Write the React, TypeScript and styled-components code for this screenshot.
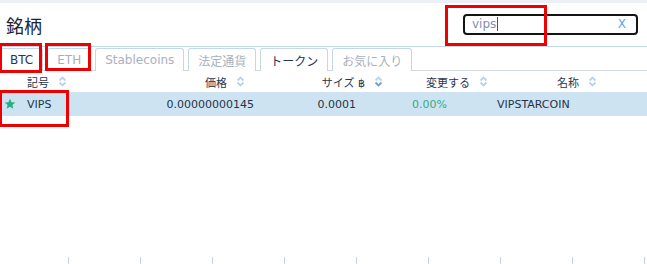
import styled, { createGlobalStyle } from "styled-components";

const GlobalStyle = createGlobalStyle`
  html, body {
    margin: 0;
    padding: 0;
    background: #ffffff;
  }
  body {
    font-family: "DejaVu Sans", "Noto Sans CJK JP", sans-serif;
    color: #273349;
  }
`;

const Page = styled.div`
  position: relative;
  width: 647px;
  height: 264px;
  display: flex;
  flex-direction: column;
  overflow: hidden;
  background: #fff;
`;

const TopStrip = styled.div`
  height: 3px;
  background: #eceff5;
`;

const Header = styled.div`
  height: 43px;
  display: flex;
  align-items: center;
  justify-content: space-between;
  padding: 0 9px 0 6px;
  border-bottom: 1px solid #c3d7eb;
`;

const Title = styled.h1`
  margin: 0;
  font-family: "Noto Sans CJK JP", sans-serif;
  font-weight: 400;
  font-size: 18px;
  color: #1b2535;
  line-height: 1;
`;

const SearchBox = styled.div`
  box-sizing: border-box;
  width: 175px;
  height: 21px;
  margin-top: -1px;
  border: 2px solid #141414;
  border-radius: 4px;
  display: flex;
  align-items: center;
  padding: 0 10px 0 7px;
  font-size: 12px;
`;

const SearchText = styled.span`
  color: #8290b0;
`;

const Caret = styled.span`
  width: 1px;
  height: 14px;
  background: #555;
  margin-left: 1px;
`;

const Clear = styled.span`
  margin-left: auto;
  color: #62a6e6;
  font-size: 12px;
`;

const Tabs = styled.div`
  display: flex;
  gap: 4px;
  padding-top: 1px;
  height: 24px;
  box-sizing: border-box;
  border-bottom: 1px solid #d3dae2;
`;

const Tab = styled.div<{ $active?: boolean }>`
  box-sizing: border-box;
  height: 23px;
  padding: 0 9px;
  display: flex;
  align-items: center;
  font-size: 12px;
  font-family: "DejaVu Sans", "Noto Sans CJK JP", sans-serif;
  color: ${(p) => (p.$active ? "#2a3550" : "#a9b0bd")};
  background: #fff;
  border: 1px solid ${(p) => (p.$active ? "#c8d6e6" : "#c5d6e8")};
  border-bottom: none;
  border-radius: 3px 3px 0 0;
`;

const grid = "22px 118px 122px 128px 100px 1fr";

const HeadRow = styled.div`
  display: grid;
  grid-template-columns: ${grid};
  height: 21px;
  align-items: center;
  font-size: 11px;
  color: #2a3650;
`;

const DataRow = styled.div`
  display: grid;
  grid-template-columns: ${grid};
  height: 24px;
  align-items: center;
  font-size: 11px;
  background: #cde3f1;
`;

const Cell = styled.div<{ $right?: boolean; $pl?: number; $pr?: number; $color?: string }>`
  display: flex;
  align-items: center;
  justify-content: ${(p) => (p.$right ? "flex-end" : "flex-start")};
  padding-left: ${(p) => p.$pl ?? 0}px;
  padding-right: ${(p) => p.$pr ?? 0}px;
  color: ${(p) => p.$color ?? "inherit"};
  white-space: nowrap;
`;

const HeadLabel = styled.span`
  font-family: "DejaVu Sans", "Noto Sans CJK JP", sans-serif;
`;

const SortIcon = ({ active }: { active?: boolean }) => (
  <svg width="9" height="11" viewBox="0 0 9 11" style={{ marginLeft: 9 }}>
    <path d="M1.5 4.5 L4.5 1.5 L7.5 4.5" fill="none" stroke="#bcd2e8" strokeWidth="1.8" />
    <path d="M1.5 6.5 L4.5 9.5 L7.5 6.5" fill="none" stroke={active ? "#6f9fd4" : "#bcd2e8"} strokeWidth="1.8" />
  </svg>
);

const Star = () => (
  <svg width="12" height="12" viewBox="0 0 24 24">
    <path d="M12 1.5l3.1 7 7.4.6-5.6 4.9 1.7 7.4L12 17.5l-6.6 3.9 1.7-7.4L1.5 9.1l7.4-.6z" fill="#2bad83" />
  </svg>
);

const Spacer = styled.div`
  flex: 1;
`;

const Ticks = styled.div`
  height: 7px;
  display: flex;
  padding-left: 68px;
  gap: 71px;
`;

const Tick = styled.div`
  width: 1px;
  height: 7px;
  background: #c7cfe6;
`;

const Mark = styled.div<{ $x: number; $y: number; $w: number; $h: number }>`
  position: absolute;
  left: ${(p) => p.$x}px;
  top: ${(p) => p.$y}px;
  width: ${(p) => p.$w}px;
  height: ${(p) => p.$h}px;
  box-sizing: border-box;
  border: 3px solid #ee0000;
  pointer-events: none;
`;

const tabs = ["BTC", "ETH", "Stablecoins", "法定通貨", "トークン", "お気に入り"];

export default function App() {
  return (
    <Page>
      <GlobalStyle />
      <TopStrip />
      <Header>
        <Title>銘柄</Title>
        <SearchBox>
          <SearchText>vips</SearchText>
          <Caret />
          <Clear>X</Clear>
        </SearchBox>
      </Header>
      <Tabs>
        {tabs.map((t, i) => (
          <Tab key={t} $active={i === 0 || i === 4}>
            {t}
          </Tab>
        ))}
      </Tabs>
      <HeadRow>
        <Cell />
        <Cell $pl={5}>
          <HeadLabel>記号</HeadLabel>
          <SortIcon />
        </Cell>
        <Cell $right $pr={17}>
          <HeadLabel>価格</HeadLabel>
          <SortIcon />
        </Cell>
        <Cell $right $pr={7}>
          <HeadLabel>サイズ ฿</HeadLabel>
          <SortIcon active />
        </Cell>
        <Cell $pl={36}>
          <HeadLabel>変更する</HeadLabel>
          <SortIcon />
        </Cell>
        <Cell $pl={67}>
          <HeadLabel>名称</HeadLabel>
          <SortIcon />
        </Cell>
      </HeadRow>
      <DataRow>
        <Cell $pl={4}>
          <Star />
        </Cell>
        <Cell $pl={5}>VIPS</Cell>
        <Cell $right $pr={8}>0.00000000145</Cell>
        <Cell $right $pr={34}>0.0001</Cell>
        <Cell $pl={22} $color="#36a985">0.00%</Cell>
        <Cell $pl={7}>VIPSTARCOIN</Cell>
      </DataRow>
      <Spacer />
      <Ticks>
        {Array.from({ length: 9 }).map((_, i) => (
          <Tick key={i} />
        ))}
      </Ticks>

      <Mark $x={445} $y={5} $w={102} $h={41} />
      <Mark $x={-1} $y={43} $w={43} $h={30} />
      <Mark $x={45} $y={43} $w={46} $h={28} />
      <Mark $x={-1} $y={90} $w={70} $h={37} />
    </Page>
  );
}
